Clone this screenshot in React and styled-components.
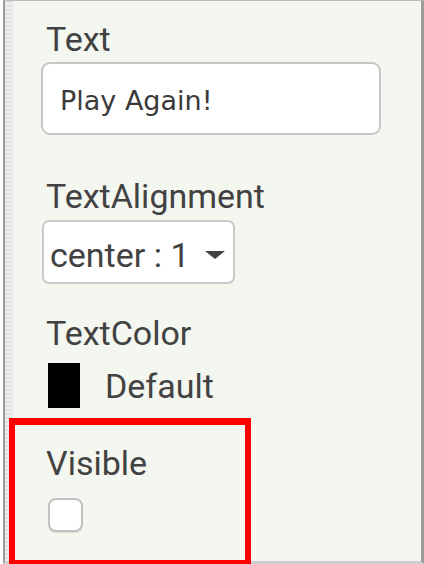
import React from 'react';
import styled, { createGlobalStyle } from 'styled-components';

const GlobalStyle = createGlobalStyle`
body {
  margin: 0;
  background: #ffffff;
  height: 564px;
  overflow: hidden;
}
`;

const Frame = styled.div`
display: flex;
margin-left: 3px;
width: 421px;
height: 564px;
box-sizing: border-box;
border-left: 2px solid #9b9b9b;
border-top: 1px solid #bdbdbd;
border-right: 3px solid #9d9d9d;
border-bottom: 3px solid #cfcfcf;
`;

const Strip = styled.div`
width: 8px;
flex: none;
background: repeating-linear-gradient(to bottom, #e2e2e2 0 2px, #eeeeee 2px 4px);
`;

const Properties = styled.div`
flex: 1;
display: flex;
flex-direction: column;
align-items: flex-start;
padding-left: 28px;
background: #f4f6f0;
font-family: Roboto, "Liberation Sans", sans-serif;
color: #424242;
`;

const Property = styled.div`
position: relative;
display: flex;
flex-direction: column;
align-items: flex-start;
margin-top: ${(p) => p.$top}px;
`;

const Label = styled.div`
font-size: 34px;
line-height: 40px;
padding-left: 5px;
margin-bottom: ${(p) => p.$gap}px;
`;

const TextBox = styled.div`
width: 340px;
height: 73px;
box-sizing: border-box;
border: 2px solid #c6c6c6;
border-radius: 9px;
background: #ffffff;
display: flex;
align-items: center;
padding: 3px 0 0 17px;
font-family: "DejaVu Sans", sans-serif;
font-size: 27px;
color: #3a3a3a;
`;

const Select = styled.div`
display: flex;
align-items: center;
margin-left: 1px;
height: 64px;
box-sizing: border-box;
padding: 5px 8px 0 6px;
border: 2px solid #cacaca;
border-radius: 7px;
background: #ffffff;
font-size: 34px;
line-height: 40px;
`;

const Arrow = styled.svg`
margin-left: 15px;
`;

const ColorRow = styled.div`
display: flex;
align-items: center;
margin-left: 7px;
font-size: 34px;
line-height: 40px;
`;

const Swatch = styled.div`
width: 32px;
height: 45px;
background: #000000;
margin-right: 25px;
`;

const CheckBox = styled.div`
margin-left: 7px;
width: 35px;
height: 34px;
box-sizing: border-box;
border: 2px solid #c2c2c2;
border-radius: 8px;
background: #ffffff;
box-shadow: 0 1px 1px rgba(0, 0, 0, 0.12);
`;

const Highlight = styled.div`
position: absolute;
left: -32px;
top: -25px;
width: 242px;
height: 148px;
box-sizing: border-box;
border: 6px solid #ff0000;
border-top-width: 7px;
pointer-events: none;
`;

export default function App() {
  return (
    <>
      <GlobalStyle />
      <Frame>
        <Strip />
        <Properties>
          <Property $top={18}>
            <Label $gap={3}>Text</Label>
            <TextBox>Play Again!</TextBox>
          </Property>
          <Property $top={41}>
            <Label $gap={4}>TextAlignment</Label>
            <Select>
              center : 1
              <Arrow width="20" height="8" viewBox="0 0 20 8">
                <path d="M0 0 L20 0 L10 8 Z" fill="#424242" />
              </Arrow>
            </Select>
          </Property>
          <Property $top={29}>
            <Label $gap={10}>TextColor</Label>
            <ColorRow>
              <Swatch />
              Default
            </ColorRow>
          </Property>
          <Property $top={35}>
            <Label $gap={15}>Visible</Label>
            <CheckBox />
            <Highlight />
          </Property>
        </Properties>
      </Frame>
    </>
  );
}
